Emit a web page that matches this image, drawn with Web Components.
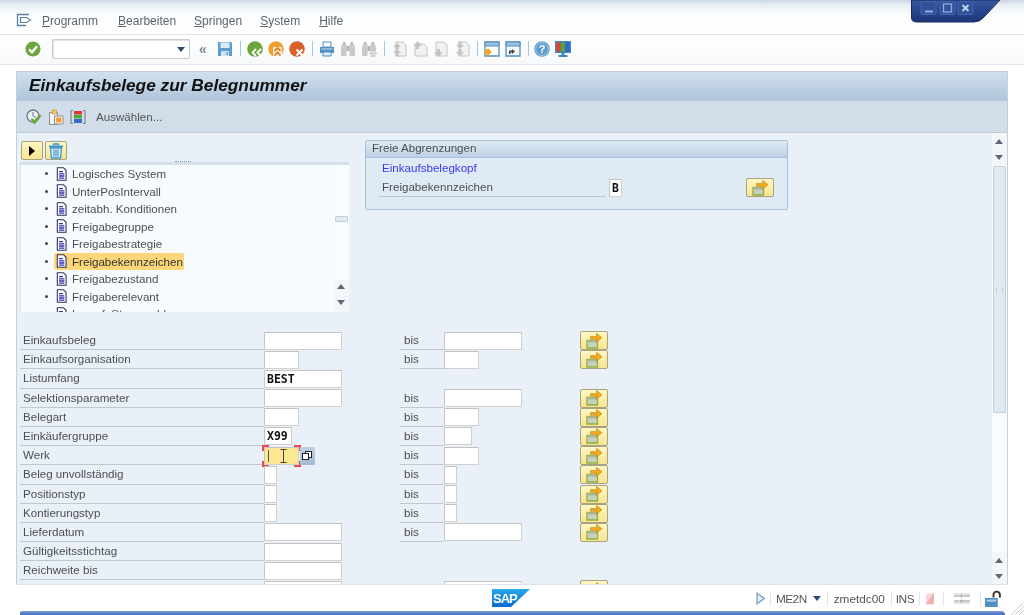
<!DOCTYPE html>
<html lang="de">
<head>
<meta charset="utf-8">
<title>Einkaufsbelege zur Belegnummer</title>
<style>
  html, body { margin: 0; padding: 0; background: #fff; overflow: hidden; }
  body { font: 12px "Liberation Sans", Arial, sans-serif; color: #4c4f53; }
</style>
</head>
<body>
<sap-shell>
  <sap-menubar slot="menu" items="Programm,Bearbeiten,Springen,System,Hilfe"></sap-menubar>
  <sap-toolbar slot="tools"></sap-toolbar>
  <sap-window slot="window" heading="Einkaufsbelege zur Belegnummer">
    <sap-tree slot="tree">
      <sap-tree-item>Logisches System</sap-tree-item>
      <sap-tree-item>UnterPosIntervall</sap-tree-item>
      <sap-tree-item>zeitabh. Konditionen</sap-tree-item>
      <sap-tree-item>Freigabegruppe</sap-tree-item>
      <sap-tree-item>Freigabestrategie</sap-tree-item>
      <sap-tree-item selected>Freigabekennzeichen</sap-tree-item>
      <sap-tree-item>Freigabezustand</sap-tree-item>
      <sap-tree-item>Freigaberelevant</sap-tree-item>
      <sap-tree-item>Lagerf. Steuerschl.</sap-tree-item>
    </sap-tree>
    <sap-free-panel slot="free" heading="Freie Abgrenzungen" group="Einkaufsbelegkopf" label="Freigabekennzeichen" value="B"></sap-free-panel>
    <sap-row slot="rows" label="Einkaufsbeleg" low="78" high="78"></sap-row>
    <sap-row slot="rows" label="Einkaufsorganisation" low="35" high="35"></sap-row>
    <sap-row slot="rows" label="Listumfang" low="78" value="BEST"></sap-row>
    <sap-row slot="rows" label="Selektionsparameter" low="78" high="78"></sap-row>
    <sap-row slot="rows" label="Belegart" low="35" high="35"></sap-row>
    <sap-row slot="rows" label="Einkäufergruppe" low="28" high="28" value="X99"></sap-row>
    <sap-row slot="rows" label="Werk" low="35" high="35" focused></sap-row>
    <sap-row slot="rows" label="Beleg unvollständig" low="13" high="13"></sap-row>
    <sap-row slot="rows" label="Positionstyp" low="13" high="13"></sap-row>
    <sap-row slot="rows" label="Kontierungstyp" low="13" high="13"></sap-row>
    <sap-row slot="rows" label="Lieferdatum" low="78" high="78"></sap-row>
    <sap-row slot="rows" label="Gültigkeitsstichtag" low="78"></sap-row>
    <sap-row slot="rows" label="Reichweite bis" low="78"></sap-row>
    <sap-row slot="rows" label="" low="78" high="78" clipped></sap-row>
  </sap-window>
  <sap-statusbar slot="status"></sap-statusbar>
</sap-shell>

<script>
// ==========================================
// ICONOS (inline SVG, viewBox 16x16)
// ==========================================
const ICONS = {
  menu: '<path d="M13 1.500H1.500v11H10" fill="none" stroke="#5f7f9f" stroke-width="1.300"/><path d="M4.500 4.500h6l4 2.500-4 2.500h-6z" fill="#fff" stroke="#5f7f9f" stroke-width="1.200"/>',
  check: '<circle cx="8" cy="8" r="7.600" fill="#6ca63c"/><path d="M4 8.300l3 3 5-6" fill="none" stroke="#fff" stroke-width="2.200"/>',
  save: '<path d="M1 1h13l1 1v13H1z" fill="#5f9bcf"/><path d="M3.500 1.500h9v5.500h-9z" fill="#dcecf8"/><path d="M4 10h8v5H4z" fill="#cfe2f2"/><path d="M9.500 11h1.500v3H9.500z" fill="#5f9bcf"/>',
  back: '<circle cx="8" cy="8" r="7.800" fill="#6ca63c"/><path d="M9 8l-3.500 3.500L9 15M14 8l-3.500 3.500L14 15" fill="none" stroke="#fff" stroke-width="1.800"/>',
  exit: '<circle cx="8" cy="8" r="7.800" fill="#f0a030"/><path d="M5 6h9v10H5z" fill="#fff" fill-opacity=".75"/><path d="M6.500 10l3-3 3 3M6.500 14.500l3-3 3 3" fill="none" stroke="#d9791c" stroke-width="1.600"/>',
  cancel: '<circle cx="8" cy="8" r="7.800" fill="#d9622b"/><path d="M7.500 8.500l6 6M13.500 8.500l-6 6" stroke="#fff" stroke-width="2"/>',
  print: '<path d="M4 1h8v5H4z" fill="#fff" stroke="#4f8fc4"/><path d="M1 6h14v6H1z" fill="#4f8fc4"/><path d="M4 11h8v4H4z" fill="#dcecf8" stroke="#4f8fc4"/><path d="M2.500 8h11" stroke="#cfe2f2"/>',
  find: '<path d="M2 3h4.500v12H1V7zM9.500 3H14l1 4v8H9.500z" fill="#c9c9c9"/><path d="M6.500 5h3v5h-3z" fill="#b5b5b5"/><path d="M3 1h2.500v2H3zM10.500 1H13v2h-2.500z" fill="#b5b5b5"/>',
  findnext: '<path d="M2 3h4.500v12H1V7zM9.500 3H14l1 4v3H9.500z" fill="#c9c9c9"/><path d="M6.500 5h3v5h-3z" fill="#b5b5b5"/><path d="M3 1h2.500v2H3zM10.500 1H13v2h-2.500z" fill="#b5b5b5"/><path d="M12 9l4 3.500-2 0V16h-4v-3.500H8z" fill="#dadada" stroke="#c0c0c0" stroke-width=".6"/>',
  first: '<path d="M5 1h7l3 3v11H5z" fill="#f1f1f1" stroke="#c4c4c4"/><path d="M6 2L2 6h2.500v2.500h3V6H10zM6 8L2 12h2.500v3.500h3V12H10z" fill="#c4c4c4"/>',
  prev: '<path d="M5 3h7l3 3v9H3V5z" fill="#f1f1f1" stroke="#c4c4c4"/><path d="M5.500 0L1 5h3v3h3V5h3z" fill="#c4c4c4"/>',
  next: '<path d="M3 1h8l3 3v11H3z" fill="#f1f1f1" stroke="#c4c4c4"/><path d="M5.500 16L1 11h3V8h3v3h3z" fill="#c4c4c4"/>',
  last: '<path d="M5 1h7l3 3v11H5z" fill="#f1f1f1" stroke="#c4c4c4"/><path d="M6 8L2 4h2.500V.5h3V4H10zM6 15.500L2 11h2.500V8h3v3H10z" fill="#c4c4c4"/>',
  session: '<path d="M1 1h14v14H1z" fill="#fff" stroke="#4f8fc4" stroke-width="1.300"/><path d="M1 1h14v4H1z" fill="#9cc2e0" stroke="#4f8fc4"/><path d="M0 11l4-4 4 4-4 4z" fill="#f5a81c"/>',
  shortcut: '<path d="M1 1h14v14H1z" fill="#f4f8fb" stroke="#4f8fc4" stroke-width="1.300"/><path d="M1 1h14v4H1z" fill="#9cc2e0" stroke="#4f8fc4"/><path d="M4 13V9.500h3V8l3 2.500L7 13v-1.500H5.500V13z" fill="#444"/>',
  help: '<circle cx="8" cy="8" r="7.800" fill="#5b9ac9"/><circle cx="8" cy="8" r="6.300" fill="none" stroke="#a8cde6"/><text x="8" y="12" text-anchor="middle" font-family="Liberation Sans" font-weight="700" font-size="11" fill="#fff">?</text>',
  layout: '<path d="M0 0h16v12H0z" fill="#3f87bd"/><path d="M1.500 1.500h4.300v9H1.500z" fill="#e8402c"/><path d="M5.800 1.500h4.400v9H5.800z" fill="#4aa83c"/><path d="M10.200 1.500h4.300v9h-4.300z" fill="#3c5fd0"/><path d="M6.500 12h3v2h-3zM3.500 14h9v2h-9z" fill="#3f87bd"/>',
  execute: '<circle cx="7" cy="7" r="6" fill="#eef3f7" stroke="#6e7a85" stroke-width="1.300"/><path d="M7 3v4l3 1.500" stroke="#6e7a85" fill="none"/><path d="M4.500 10.500l4 5L15.500 7l-2.200-1.500-4.800 5.500-2-1.700z" fill="#6ca63c"/>',
  copy: '<path d="M1.500 3.500h8v12h-8z" fill="#f4f4f4" stroke="#8d8d8d"/><path d="M4 1h4.500v4H4z" fill="#f2c76a" stroke="#c59434" stroke-width=".6"/><path d="M6.500 7h8.500v8H6.500z" fill="#fbfbfb" stroke="#8d8d8d"/><path d="M8 8.500h5.500v5H8z" fill="#f0a030"/>',
  variant: '<path d="M3 1.500H1v13h2M13 1.500h2v13h-2" fill="none" stroke="#6a7480"/><path d="M4 2h8v3.500H4z" fill="#d83a2a"/><path d="M4 6h8v3.500H4z" fill="#4aa83c"/><path d="M4 10h8v4H4z" fill="#3a6cc8"/>',
  doc: '<path d="M1.500.8h7l3 3v11.400h-10z" fill="#fff" stroke="#2b2f58" stroke-width="1.200"/><path d="M3.500 4.500h4.500v1.500H3.500zM3.500 7h6v1.600h-6zM3.500 9.500h6v1.600h-6zM3.500 12h6v1.500h-6z" fill="#3232b0"/>',
  trash: '<path d="M1 3.500h14" stroke="#3f95cf" stroke-width="2"/><path d="M5.500 2.500V1h5v1.500" fill="none" stroke="#3f95cf" stroke-width="1.400"/><path d="M2.500 5h11L12.500 15h-9z" fill="#e6f3fb" stroke="#3f95cf" stroke-width="1.300"/><path d="M6 6.500v7M8 6.500v7M10 6.500v7" stroke="#3f95cf" stroke-width="1.200"/>',
  multi: '<path d="M1 7.500h10.500v7.500H1z" fill="#c8d0c0" stroke="#8fb03e" stroke-width="1.300"/><path d="M1.500 7.500h9.500v2H1.500z" fill="#aeb8a4"/><path d="M4.500 3.500h6V.3l5.500 4.500-5.500 4.500V6.200h-6z" fill="#f4a81a" stroke="#a87a22" stroke-width=".5"/>',
  playlog: '<path d="M2.500 1.500l9 6.500-9 6.500z" fill="#e4eef7" stroke="#6f9fc8" stroke-width="1.500"/>',
  warn: '<path d="M1 15V3l10-2v14z" fill="#f8d4d8"/><path d="M1 15L11 1v14z" fill="#f2acb2"/>',
  settings: '<path d="M0 3h16M0 12h16" stroke="#c8c8c8"/><path d="M0 5h7M10 5h6M0 10h5M8 10h8" stroke="#b5b5b5" stroke-width="1.300"/><path d="M7 3l3 2-3 2zM8 8L5 10l3 2z" fill="#b0b0b0"/>',
  lock: '<path d="M0 7.500h12v8.500H0z" fill="#4f8fc4"/><path d="M1.500 9h9v2h-9z" fill="#a9cde8"/><path d="M8 7V4.500a3 3 0 0 1 6 0V7" fill="none" stroke="#333" stroke-width="1.800"/>',
};

function svgIcon(name, size = 16) {
  return `<svg width="${size}" height="${size}" viewBox="0 0 16 16" aria-hidden="true">${ICONS[name]}</svg>`;
}

// ==========================================
// SAP-SHELL: estructura general de la página
// ==========================================
class SapShell extends HTMLElement {
  constructor() {
    super();
    this.attachShadow({ mode: 'open' });
    this.shadowRoot.innerHTML = `
      <style>
        :host { display: flex; flex-direction: column; width: 1024px; height: 615px; position: relative; overflow: hidden; filter: blur(.5px); }
        .winctl { position: absolute; left: 908px; top: 0; }
        .window-slot { display: block; padding: 6px 16px 0; }
      </style>
      <slot name="menu"></slot>
      <slot name="tools"></slot>
      <div class="window-slot"><slot name="window"></slot></div>
      <slot name="status"></slot>
      <svg class="winctl" width="96" height="24" viewBox="0 0 96 24">
        <defs><linearGradient id="wc" x1="0" y1="0" x2="0" y2="1"><stop offset="0" stop-color="#34589f"/><stop offset="1" stop-color="#1b3679"/></linearGradient></defs>
        <path d="M3.500 0H92L76 17q-4 5-10 5H9q-6 0-5.500-5z" fill="url(#wc)" stroke="#1b2c5c"/>
        <rect x="13" y="1.500" width="15" height="13" rx="1" fill="#30529c" stroke="#4465ae"/>
        <rect x="17" y="10.500" width="8" height="2" fill="#93abd6"/>
        <rect x="32" y="1.500" width="15" height="13" rx="1" fill="#30529c" stroke="#4465ae"/>
        <rect x="35.500" y="4" width="8" height="8" fill="none" stroke="#93abd6" stroke-width="1.300"/>
        <rect x="50" y="1.500" width="15" height="13" rx="1" fill="#30529c" stroke="#4465ae"/>
        <path d="M54.500 5l6 6M60.500 5l-6 6" stroke="#c5d3ec" stroke-width="1.800"/>
      </svg>
    `;
  }
}

// ==========================================
// SAP-MENUBAR: barra de menú
// ==========================================
class SapMenubar extends HTMLElement {
  constructor() {
    super();
    this.attachShadow({ mode: 'open' });
  }

  connectedCallback() {
    const items = this.getAttribute('items').split(',');
    const gaps = [20, 18, 18, 19, 0];
    this.shadowRoot.innerHTML = `
      <style>
        :host { display: flex; align-items: center; flex: none; box-sizing: border-box; padding: 7px 0 0 16px; height: 35px;
          background: linear-gradient(#ccd6e2 0, #e9eef4 5px, #fbfcfd 14px, #fff 100%); border-bottom: 1px solid #dfe3e8; color: #5b6672; }
        .ico { width: 26px; display: flex; }
        u { text-decoration-thickness: 1px; text-underline-offset: 1px; }
        span { display: block; }
      </style>
      <div class="ico">${svgIcon('menu')}</div>
      ${items.map((t, i) => `<span style="margin-right:${gaps[i]}px"><u>${t[0]}</u>${t.slice(1)}</span>`).join('')}
    `;
  }
}

// ==========================================
// SAP-TOOLBAR: barra de herramientas estándar
// ==========================================
class SapToolbar extends HTMLElement {
  constructor() {
    super();
    this.attachShadow({ mode: 'open' });
    const group = (names) => `<div class="group">${names.map(n => svgIcon(n)).join('')}</div>`;
    this.shadowRoot.innerHTML = `
      <style>
        :host { display: flex; align-items: center; height: 30px; flex: none; box-sizing: border-box; padding: 0 0 2px 25px;
          background: linear-gradient(#fff, #f6f8fa); border-bottom: 1px solid #e2e5e9; }
        .group { display: flex; gap: 5px; align-items: center; }
        svg { display: block; }
        .sep { width: 1px; height: 15px; background: #a9c6de; margin: 0 6px 0 7px; }
        .cmd { width: 136px; height: 18px; margin: 0 9px 0 11px; border: 1px solid #c8cbcf; box-shadow: inset 1px 1px 0 #e2e4e6; background: #fff; position: relative; border-radius: 1px; }
        .cmd::after { content: ""; position: absolute; right: 4px; top: 7px; border: 4px solid transparent; border-top: 5px solid #2a4a7c; border-bottom: 0; }
        .back { width: 9px; color: #7f8a95; font: 700 14px/14px "Liberation Sans", sans-serif; margin-right: 9px; }
      </style>
      ${svgIcon('check')}
      <div class="cmd"></div>
      <div class="back">«</div>
      ${svgIcon('save')}
      <div class="sep"></div>
      ${group(['back', 'exit', 'cancel'])}
      <div class="sep"></div>
      ${group(['print', 'find', 'findnext'])}
      <div class="sep"></div>
      ${group(['first', 'prev', 'next', 'last'])}
      <div class="sep"></div>
      ${group(['session', 'shortcut'])}
      <div class="sep" style="margin-right:5px"></div>
      ${group(['help', 'layout'])}
    `;
  }
}

// ==========================================
// SAP-SCROLLBAR
// ==========================================
class SapScrollbar extends HTMLElement {
  constructor() {
    super();
    this.attachShadow({ mode: 'open' });
  }

  connectedCallback() {
    const offset = this.getAttribute('thumb-top') || 0;
    const size = this.getAttribute('thumb-size') || 5;
    const arrows = `<div class="arrow up"></div><div class="arrow down"></div>`;
    this.shadowRoot.innerHTML = `
      <style>
        :host { display: flex; flex-direction: column; flex: none; width: 15px; box-sizing: border-box; background: #f9fbfc; }
        .arrow { height: 16px; flex: none; position: relative; background: #f3f6f9; }
        .arrow::after { content: ""; position: absolute; left: 3px; top: var(--arrow-top, 5.500px); border: 4.500px solid transparent; }
        .up::after { border-top: 0; border-bottom: 5px solid #5a6a7a; }
        .down::after { border-bottom: 0; border-top: 5px solid #5a6a7a; }
        .thumb { margin-top: ${offset}px; height: ${size}px; flex: none; box-sizing: border-box; margin-left: 1px; margin-right: 1px;
          background: #e1e9f1; border: 1px solid #c4ced9; border-radius: 1px; display: flex; align-items: center; justify-content: center; }
        .grip { width: 5px; height: 7px; border-left: 1px dotted #b8c3cf; border-right: 1px dotted #b8c3cf; }
        .fill { flex: 1; }
      </style>
      ${this.hasAttribute('top-arrows') ? arrows : ''}
      <div class="thumb">${size > 20 ? '<div class="grip"></div>' : ''}</div>
      <div class="fill"></div>
      ${arrows}
    `;
  }
}

// ==========================================
// SAP-WINDOW: título, barra de aplicación y área de selección
// ==========================================
class SapWindow extends HTMLElement {
  constructor() {
    super();
    this.attachShadow({ mode: 'open' });
  }

  connectedCallback() {
    this.shadowRoot.innerHTML = `
      <style>
        :host { display: block; height: 514px; box-sizing: border-box; border: 1px solid #c3cfdb; border-bottom-color: #dbe3eb; background: #e9f0f7; overflow: hidden; font-size: 11.600px; }
        .title { height: 29px; box-sizing: border-box; padding: 3px 0 0 12px; background: linear-gradient(#d1e0ee, #aec4da);
          font: italic 700 17.300px/20px "Liberation Sans", sans-serif; color: #111; }
        .appbar { height: 32px; box-sizing: border-box; display: flex; align-items: center; padding-left: 9px; gap: 6px;
          background: #d1dde8; border-bottom: 1px solid #c0ccd8; color: #555; }
        .appbar span { margin-left: 4px; }
        svg { display: block; }
        .content { display: flex; height: 451px; }
        .main { flex: 1; min-width: 0; overflow: hidden; padding-left: 3px; }
        .top { display: flex; height: 198px; gap: 16px; }
        .rows { display: block; }
      </style>
      <div class="title">${this.getAttribute('heading')}</div>
      <div class="appbar">
        ${svgIcon('execute')}${svgIcon('copy')}${svgIcon('variant')}
        <span>Auswählen...</span>
      </div>
      <div class="content">
        <div class="main">
          <div class="top">
            <slot name="tree"></slot>
            <slot name="free"></slot>
          </div>
          <div class="rows"><slot name="rows"></slot></div>
        </div>
        <sap-scrollbar top-arrows thumb-top="1" thumb-size="247"></sap-scrollbar>
      </div>
    `;
  }
}

// ==========================================
// SAP-TREE: árbol de campos con sus botones
// ==========================================
class SapTree extends HTMLElement {
  constructor() {
    super();
    this.attachShadow({ mode: 'open' });
    this.shadowRoot.innerHTML = `
      <style>
        :host { display: block; width: 329px; flex: none; padding-top: 8px; }
        .btns { display: flex; gap: 2px; padding-left: 1px; height: 21px; }
        .btn { width: 22px; height: 19px; box-sizing: border-box; border: 1px solid #a8a282; border-radius: 2px;
          background: linear-gradient(#fff8c4, #f9e48e); display: flex; align-items: center; justify-content: center; }
        .btn.tri::before { content: ""; border: 5px solid transparent; border-left: 6px solid #000; border-right: 0; }
        .handle { height: 3px; background: #d5e0ea; position: relative; }
        .handle::after { content: ""; position: absolute; left: 155px; top: -1px; width: 16px; border-top: 1px dotted #8a98a6; }
        .box { display: flex; height: 147px; background: #f8fbfd; border-left: 1px solid #dde5ec; overflow: hidden; box-sizing: border-box; }
        .list { flex: 1; overflow: hidden; min-width: 0; }
        svg { display: block; }
      </style>
      <div class="btns">
        <div class="btn tri"></div>
        <div class="btn">${svgIcon('trash')}</div>
      </div>
      <div class="handle"></div>
      <div class="box">
        <div class="list"><slot></slot></div>
        <sap-scrollbar thumb-top="51" thumb-size="6" style="--arrow-top:3.500px"></sap-scrollbar>
      </div>
    `;
  }
}

class SapTreeItem extends HTMLElement {
  constructor() {
    super();
    this.attachShadow({ mode: 'open' });
    this.shadowRoot.innerHTML = `
      <style>
        :host { display: flex; align-items: center; height: 17.500px; padding-left: 24px; color: #4c4f53; white-space: nowrap; }
        .dot { width: 3px; height: 3px; background: #444; border-radius: 50%; margin-right: 8px; flex: none; }
        .label { display: flex; align-items: center; height: 17px; padding: 0 1px 0 2px; gap: 2px; border-radius: 2px; margin-left: -2px; }
        :host([selected]) .label { background: #fdd67a; color: #333; }
        svg { display: block; flex: none; }
      </style>
      <div class="dot"></div>
      <div class="label">${svgIcon('doc', 14)}<slot></slot></div>
    `;
  }
}

// ==========================================
// SAP-FREE-PANEL: grupo "Freie Abgrenzungen"
// ==========================================
class SapFreePanel extends HTMLElement {
  constructor() {
    super();
    this.attachShadow({ mode: 'open' });
  }

  connectedCallback() {
    this.shadowRoot.innerHTML = `
      <style>
        :host { display: block; width: 423px; height: 70px; flex: none; margin-top: 7px; box-sizing: border-box;
          border: 1px solid #a9c0d8; border-radius: 2px; background: #deeaf4; color: #4c4f53; }
        .head { height: 16px; line-height: 14px; padding-left: 6px; background: linear-gradient(#e0eaf3, #bcd1e5); border-bottom: 1px solid #a9c0d8; }
        .group { color: #3a3af0; padding: 2px 0 0 16px; height: 17px; line-height: 15px; box-sizing: border-box; }
        .line { display: flex; align-items: center; margin-top: 3px; padding-left: 13px; height: 19px; }
        .lbl { width: 227px; height: 19px; line-height: 18px; padding-left: 3px; box-sizing: border-box; border-bottom: 1px solid #b7c5d2; }
        .btn { margin-left: 124px; }
        sap-field { margin-left: 3px; }
      </style>
      <div class="head">${this.getAttribute('heading')}</div>
      <div class="group">${this.getAttribute('group')}</div>
      <div class="line">
        <div class="lbl">${this.getAttribute('label')}</div>
        <sap-field width="13" value="${this.getAttribute('value')}"></sap-field>
        <sap-multi-button class="btn"></sap-multi-button>
      </div>
    `;
  }
}

// ==========================================
// SAP-FIELD y SAP-MULTI-BUTTON
// ==========================================
class SapField extends HTMLElement {
  constructor() {
    super();
    this.attachShadow({ mode: 'open' });
  }

  connectedCallback() {
    const focused = this.hasAttribute('focused');
    this.shadowRoot.innerHTML = `
      <style>
        :host { display: block; position: relative; flex: none; width: ${this.getAttribute('width')}px; height: 18px; box-sizing: border-box;
          border: 1px solid #d0d0d0; border-top-color: #c2c2c2; border-left-color: #c6c6c6; border-radius: 1px; background: ${focused ? '#fde892' : '#fff'}; }
        .value { font: 700 11.500px/16px "DejaVu Sans Mono", monospace; color: #111; padding-left: 2px; white-space: nowrap; overflow: hidden; }
        .caret { position: absolute; left: 3px; top: 2px; width: 1px; height: 12px; background: #555; }
        .corner { position: absolute; width: 5px; height: 4px; border: 0 solid #ea4a4a; }
        .tl { left: -3px; top: -3px; border-width: 2px 0 0 2px; }
        .tr { right: -3px; top: -3px; border-width: 2px 2px 0 0; }
        .bl { left: -3px; bottom: -3px; border-width: 0 0 2px 2px; }
        .br { right: -3px; bottom: -3px; border-width: 0 2px 2px 0; }
        .ibeam { position: absolute; left: 15px; top: 1px; display: block; }
      </style>
      <div class="value">${this.getAttribute('value') || ''}</div>
      ${focused ? `
        <div class="caret"></div>
        <div class="corner tl"></div><div class="corner tr"></div><div class="corner bl"></div><div class="corner br"></div>
        <svg class="ibeam" width="7" height="14" viewBox="0 0 7 14"><path d="M.5.5h6M3.500.5v13M.5 13.500h6" fill="none" stroke="#444"/></svg>
      ` : ''}
    `;
  }
}

class SapMultiButton extends HTMLElement {
  constructor() {
    super();
    this.attachShadow({ mode: 'open' });
    this.shadowRoot.innerHTML = `
      <style>
        :host { display: flex; align-items: center; justify-content: center; flex: none; width: 28px; height: 19px; box-sizing: border-box;
          border: 1px solid #a8a282; border-radius: 2px; background: linear-gradient(#fff8c4, #f9e48e); }
        svg { display: block; }
      </style>
      ${svgIcon('multi', 16)}
    `;
  }
}

// ==========================================
// SAP-ROW: fila de selección (desde / bis)
// ==========================================
class SapRow extends HTMLElement {
  constructor() {
    super();
    this.attachShadow({ mode: 'open' });
  }

  connectedCallback() {
    const low = this.getAttribute('low');
    const high = this.getAttribute('high');
    const value = this.getAttribute('value') || '';
    const focused = this.hasAttribute('focused');
    // La última fila queda cortada por el área de scroll: su "bis" no llega a verse
    const bisText = this.hasAttribute('clipped') ? '' : 'bis';
    this.shadowRoot.innerHTML = `
      <style>
        :host { display: grid; grid-template-columns: 244px 136px 44px 136px 28px; height: 19.200px; align-items: start; color: #4c4f53; white-space: nowrap; }
        .lbl { height: 18.200px; line-height: 18px; box-sizing: content-box; padding-left: 3px; border-bottom: 1px solid #bcc8d4; width: 241px; }
        .bis { line-height: 18px; padding-left: 4px; box-sizing: border-box; height: 19.200px; border-bottom: 1px solid #bcc8d4; }
        .cell { display: flex; align-items: center; padding-top: .5px; }
        .f4 { width: 15px; height: 18px; margin-left: 1px; background: linear-gradient(#c0d0e2, #a4bcd5); position: relative; border-radius: 1px; }
        .f4::before, .f4::after { content: ""; position: absolute; width: 7px; height: 7px; box-sizing: border-box; border: 1px solid #222; background: #fff; }
        .f4::before { left: 5px; top: 4px; }
        .f4::after { left: 2px; top: 6px; }
      </style>
      <div class="lbl">${this.getAttribute('label')}</div>
      <div class="cell">
        <sap-field width="${low}" value="${value}" ${focused ? 'focused' : ''}></sap-field>
        ${focused ? '<div class="f4"></div>' : ''}
      </div>
      ${high ? `
        <div class="bis">${bisText}</div>
        <div class="cell"><sap-field width="${high}"></sap-field></div>
        <sap-multi-button></sap-multi-button>
      ` : ''}
    `;
  }
}

// ==========================================
// SAP-STATUSBAR: logo y barra de estado
// ==========================================
class SapStatusbar extends HTMLElement {
  constructor() {
    super();
    this.attachShadow({ mode: 'open' });
    this.shadowRoot.innerHTML = `
      <style>
        :host { display: flex; flex-direction: column; flex: none; height: 30px; position: relative; background: #fff; color: #555; font-size: 11.800px; }
        .line { flex: 1; display: grid; grid-template-columns: 1fr 40px 1fr; align-items: center; }
        .logo { display: block; grid-column: 2; }
        .items { grid-column: 3; display: flex; align-items: center; justify-content: flex-end; padding: 1px 22px 0 0; height: 100%; box-sizing: border-box; }
        .it { display: flex; align-items: center; height: 15px; padding: 0 6px; border-right: 1px solid #e2e6ea; }
        .it:last-child { border-right: 0; padding-right: 0; }
        .tight { letter-spacing: -.5px; }
        .drop { width: 0; margin-left: 6px; border: 4px solid transparent; border-top: 5px solid #2a4a7c; border-bottom: 0; }
        svg { display: block; }
        .bar { height: 4px; margin: 0 19px 0 20px; flex: none; background: linear-gradient(#7f9fd8, #3f6cc0); border-radius: 6px 12px 0 0; }
        .grip { position: absolute; right: 0; bottom: 0; }
      </style>
      <div class="line">
        <svg class="logo" width="39" height="18" viewBox="0 0 39 18">
          <defs><linearGradient id="sl" x1="0" y1="0" x2="0" y2="1"><stop offset="0" stop-color="#26a8ee"/><stop offset="1" stop-color="#0a6ccb"/></linearGradient></defs>
          <path d="M0 0h38L19 18H0z" fill="url(#sl)"/>
          <text x="1" y="14" font-family="Liberation Sans" font-weight="700" font-size="13" letter-spacing="-1" fill="#fff">SAP</text>
        </svg>
        <div class="items">
          <div class="it" style="padding:0 2px 0 0">${svgIcon('playlog', 13)}</div>
          <div class="it" style="padding-left:5px"><span class="tight">ME2N</span><div class="drop"></div></div>
          <div class="it">zmetdc00</div>
          <div class="it tight" style="padding:0 5px 0 4px">INS</div>
          <div class="it" style="padding:0 5px">${svgIcon('warn', 13)}</div>
          <div class="it" style="padding:0 10px">${svgIcon('settings', 16)}</div>
          <div class="it" style="padding-left:4px">${svgIcon('lock', 17)}</div>
        </div>
      </div>
      <div class="bar"></div>
      <svg class="grip" width="14" height="12" viewBox="0 0 14 12"><path d="M1 12L13 0M5 12l9-9M9 12l5-5" stroke="#c8cdd3"/></svg>
    `;
  }
}

customElements.define('sap-shell', SapShell);
customElements.define('sap-menubar', SapMenubar);
customElements.define('sap-toolbar', SapToolbar);
customElements.define('sap-scrollbar', SapScrollbar);
customElements.define('sap-window', SapWindow);
customElements.define('sap-tree', SapTree);
customElements.define('sap-tree-item', SapTreeItem);
customElements.define('sap-free-panel', SapFreePanel);
customElements.define('sap-field', SapField);
customElements.define('sap-multi-button', SapMultiButton);
customElements.define('sap-row', SapRow);
customElements.define('sap-statusbar', SapStatusbar);
</script>
</body>
</html>
